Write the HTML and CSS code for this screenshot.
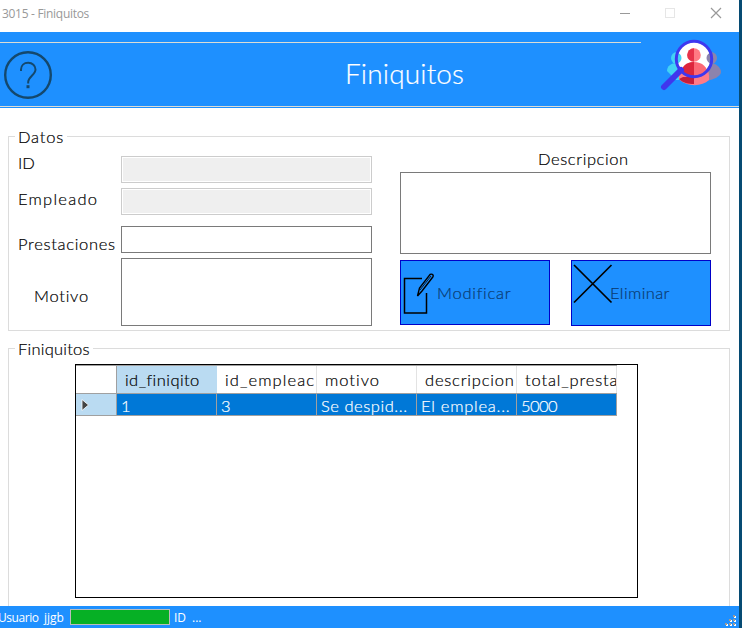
FILE: index.html
```html
<!DOCTYPE html>
<html lang="es">
<head>
<meta charset="utf-8">
<title>3015 - Finiquitos</title>
<link rel="stylesheet" href="styles.css">
</head>
<body>
<div class="desktop">
<main class="window">
  <header class="titlebar">
    <span class="caption">3015 - Finiquitos</span>
    <svg class="controls" width="120" height="32" viewBox="0 0 120 32" fill="none">
      <path d="M1 13.5h10" stroke="#999"/>
      <rect x="46.500" y="8.500" width="9" height="9" stroke="#e6e6e6"/>
      <path d="M92 8l10 10M102 8l-10 10" stroke="#999" stroke-width="1.200"/>
    </svg>
  </header>
  <section class="banner">
    <div class="rule"></div>
    <div class="banner-row">
      <svg class="help" width="50" height="50" viewBox="0 0 50 50" fill="none" stroke="#14486d">
        <circle cx="25" cy="25" r="22.800" stroke-width="2.400"/>
        <path d="M18 21v-1.500c0-4 3-6.700 7.200-6.700s7.300 2.800 7.300 6.700c0 5-7.300 7.500-7.300 12.500v1.500" stroke-width="2"/>
        <path d="M25 35.200v3" stroke-width="3"/>
      </svg>
      <h1><span>Finiquitos</span></h1>
      <svg class="people" width="62" height="56" viewBox="0 0 62 56">
        <defs>
          <clipPath id="lens"><circle cx="34" cy="21" r="18"/></clipPath>
        </defs>
        <g fill="#42d2f5"><circle cx="17" cy="20" r="6"/><path d="M7 33c0-5 4-8 10-8 5 0 9 3 9 8l-5 9H16z"/></g>
        <g fill="#8c83ad"><circle cx="51" cy="20" r="6"/><path d="M44 26c8-4 17 2 17 8 0 4-7 8-16 9z"/></g>
        <path d="M19 41c-1-12 5-16 15-16s16 5 15 17c-7 7-23 7-30-1z" fill="#ff7b88"/>
        <circle cx="34" cy="21" r="17" fill="#fff"/>
        <g clip-path="url(#lens)">
          <circle cx="16" cy="20" r="5.500" fill="#42d2f5"/><path d="M12 26c7-1 10 4 11 11H12z" fill="#50c8ee"/>
          <circle cx="52" cy="20" r="5.500" fill="#8c83ad"/><path d="M56 26c-7-1-10 4-11 11h11z" fill="#8c83ad"/>
          <path d="M20 42c0-12 5-18 14-18s15 6 15 18z" fill="#fb6875"/>
          <path d="M34 24c-9 0-14 6-14 18h14z" fill="#dc263d"/>
        </g>
        <path d="M19 41c4 4 9 5 15 5V39H23z" fill="#c61d3b"/>
        <circle cx="34" cy="17" r="6.800" fill="#ff7b84"/><path d="M34 10.200a6.800 6.800 0 0 0 0 13.600z" fill="#e6334a"/>
        <path d="M4 49l17-17" stroke="#4036ed" stroke-width="6" stroke-linecap="round"/>
        <circle cx="34" cy="21" r="17.700" fill="none" stroke="#3e38ef" stroke-width="3"/>
      </svg>
    </div>
    <div class="rule full"></div>
  </section>

  <section class="group datos">
    <h2 class="legend"><span class="t-datos">Datos</span></h2>
    <div class="form">
      <div class="fields">
        <label class="t-id">ID</label><div class="input disabled"></div>
        <label class="t-emp">Empleado</label><div class="input disabled"></div>
        <label class="t-pre low">Prestaciones</label><div class="input gap"></div>
        <label class="t-mot tall">Motivo</label><div class="input area"></div>
      </div>
      <div class="side">
        <label class="t-desc">Descripcion</label>
        <div class="input description"></div>
        <div class="actions">
          <button class="edit">
            <svg width="34" height="44" viewBox="0 0 34 44" fill="none" stroke="#000">
              <path d="M22 6.500H4.500V41h22V21" stroke-width="1.500"/>
              <path d="M17.500 24l2-8L30 2.500q2-1 3 .5.500 1-.2 2L22 19z" stroke-width="1.400"/><path d="M20 18L31 4" stroke-width=".8"/>
            </svg><span>Modificar</span>
          </button>
          <button class="remove">
            <svg width="40" height="40" viewBox="0 0 40 40" stroke="#000" stroke-width="1.700"><path d="M1 1l37.500 37.500M38.500 1L1 38.500"/></svg><span>Eliminar</span>
          </button>
        </div>
      </div>
    </div>
  </section>

  <section class="group lista">
    <h2 class="legend"><span class="t-fin">Finiquitos</span></h2>
    <div class="gridbox">
      <div class="grid head">
        <div></div><div class="sel"><span class="h1c">id_finiqito</span></div><div><span class="h2c">id_empleac</span></div><div><span class="h3c">motivo</span></div><div><span class="h4c">descripcion</span></div><div><span class="h5c">total_presta</span></div>
      </div>
      <div class="grid row">
        <div class="marker"><svg width="8" height="12" viewBox="0 0 8 12"><path d="M1 .5v11L7.500 6z" fill="#444" stroke="#fff" stroke-width=".8"/></svg></div><div>1</div><div>3</div><div><span class="c3">Se despid...</span></div><div><span class="c4">El emplea...</span></div><div><span class="c5">5000</span></div>
      </div>
    </div>
  </section>

  <footer class="status">
    <span class="s-user">Usuario</span><span class="s-name">jjgb</span><div class="progress"></div><span class="s-id">ID</span><span class="s-dots">...</span>
    <svg class="grip" width="12" height="12" viewBox="0 0 12 12">
      <path d="M9 1h2v2H9zM5 5h2v2H5zM9 5h2v2H9zM1 9h2v2H1zM5 9h2v2H5zM9 9h2v2H9z" fill="#fff"/>
      <path d="M8 0h2v2H8zM4 4h2v2H4zM8 4h2v2H8zM0 8h2v2H0zM4 8h2v2H4zM8 8h2v2H8z" fill="#a09a94"/>
    </svg>
  </footer>
</main>
</div>
</body>
</html>
```

FILE: styles.css
```css
* { box-sizing: border-box; }
body { margin: 0; overflow: hidden; font: 300 16.5px/20px "Century Gothic", Lato, sans-serif; color: #000; -webkit-text-stroke: .2px; }
h1, h2 { margin: 0; font: inherit; }
.desktop { width: 742px; height: 628px; padding-right: 3px; background: #064b73; }
.window { display: flex; flex-direction: column; width: 739px; height: 628px; background: #fff; }
.titlebar { display: flex; justify-content: space-between; height: 32px; -webkit-text-stroke: 0; }
.caption { padding: 4px 0 0 2px; font: 400 12px/20px "Segoe UI", "Open Sans", sans-serif; color: #999; letter-spacing: -.3px; }
.banner { height: 76px; background: #1e90ff; padding-top: 10px; }
.rule { width: 641px; height: 1px; background: #dcdcd4; }
.rule.full { width: 100%; }
.banner-row { display: flex; height: 63px; }
.help { margin: 7px 0 0 3px; flex: none; }
h1 { flex: 1; padding: 12px 0 0 292px; font-size: 28px; line-height: 36px; color: #fff; letter-spacing: .15px; }
.people { flex: none; margin: -5px 17px 0 0; }
.group { width: 722px; margin-left: 8px; border: 1px solid #dcdcdc; flex: none; }
.legend { width: max-content; height: 20px; margin: -10px 0 0 6px; padding: 0 3px 0 3px; background: #fff; }
.t-datos { letter-spacing: .8px; }
.t-emp { letter-spacing: 1.25px; }
.t-pre { letter-spacing: .7px; }
.t-mot { letter-spacing: .75px; }
.t-desc { letter-spacing: .6px; }
.t-fin { letter-spacing: .25px; }
.datos { margin-top: 28px; height: 195px; }
.form { display: flex; padding: 9px 0 0 9px; }
.fields { display: grid; grid-template-columns: 103px 251px; grid-template-rows: 27px 27px 33px 68px; row-gap: 5px; width: 382px; }
.fields label { margin-top: -3px; white-space: nowrap; }
.fields .t-emp { margin-top: 1px; }
.fields .low { margin-top: 14px; }
.fields .tall { margin: 28px 0 0 16px; }
.input { border: 1px solid #7a7a7a; background: #fff; }
.input.disabled { border-color: #ccc; background: #efefef; box-shadow: inset 0 0 0 1px #fff; }
.input.gap { margin-top: 6px; }
.side { width: 311px; }
.side label { display: block; margin: -7px 0 3px 138px; height: 20px; }
.description { height: 82px; }
.actions { display: flex; justify-content: space-between; align-items: flex-start; margin-top: 6px; }
button { display: flex; padding: 0; border: 1px solid #0000c8; background: #1e90ff; font: inherit; color: #0a3a70; text-align: left; }
.edit { width: 150px; height: 65px; letter-spacing: .75px; }
.edit svg { margin: 11px 0 0 -1px; }
.edit span { margin: 22px 0 0 3px; }
.remove { width: 140px; height: 66px; letter-spacing: .4px; }
.remove svg { margin: 3px 0 0 1px; }
.remove span { margin: 22px 0 0 -3px; }
.lista { margin-top: 17px; height: 258px; flex: 1 1 0; border-bottom: 0; }
.gridbox { width: 563px; height: 234px; margin: 5px 0 0 66px; border: 1px solid #000; }
.grid { display: grid; grid-template-columns: 41px repeat(5, 100px); width: 541px; }
.grid > div { border-right: 1px solid #a0a0a0; overflow: hidden; white-space: nowrap; }
.head { height: 29px; border-top: 1px solid #a0a0a0; border-bottom: 1px solid #a0a0a0; }
.head > div { padding: 4px 0 0 8px; border-color: #e3e3e3; }
.head > div:first-child { border-color: #a0a0a0; }
.head .sel { background: #badbf2; border-color: #badbf2; }
.h1c { letter-spacing: .45px; }
.h2c { letter-spacing: 1.1px; }
.h3c { letter-spacing: 1px; }
.h4c { letter-spacing: .8px; }
.h5c { letter-spacing: .85px; }
.row { height: 22px; border-bottom: 1px solid #a0a0a0; background: #0078d7; color: #fff; }
.row > div { padding: 2px 0 0 4px; }
.row .marker { background: #badbf2; padding: 5px 0 0 5px; line-height: 0; }
.c3 { letter-spacing: .55px; }
.c4 { letter-spacing: .75px; }
.c5 { letter-spacing: -.6px; }
.status { display: flex; height: 22px; flex: none; background: #1e90ff; color: #fff; font: 400 12px/23px "Segoe UI", "Open Sans", sans-serif; white-space: nowrap; -webkit-text-stroke: 0; }
.s-user { width: 46px; margin-left: -2px; letter-spacing: -.45px; }
.s-name { width: 26px; }
.progress { width: 100px; height: 16px; margin-top: 3px; border: 1px solid #bcbcbc; background: #06b025; }
.s-id { margin-left: 4px; width: 18px; }
.grip { margin: 9px 2px 0 auto; }
```
